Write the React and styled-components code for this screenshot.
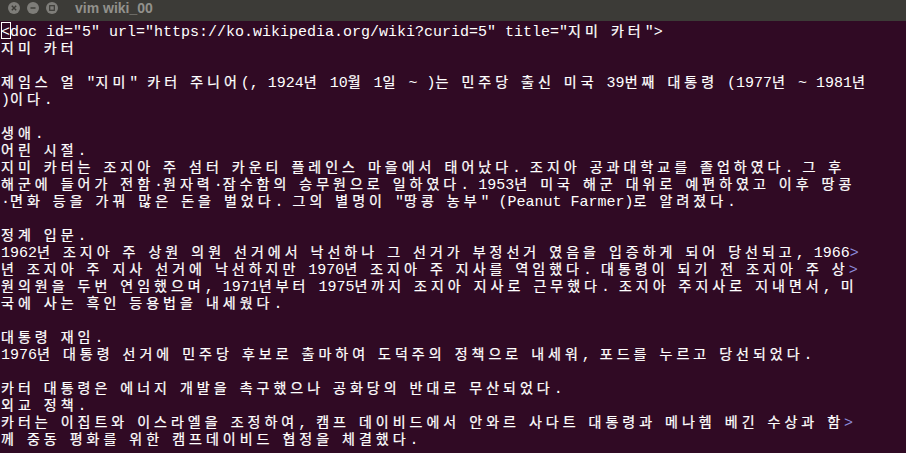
import React from "react";
import styled, { createGlobalStyle } from "styled-components";

const GlobalStyle = createGlobalStyle`
  html, body {
    margin: 0;
    padding: 0;
    background: #300a24;
  }
  body {
    width: 906px;
    height: 453px;
    overflow: hidden;
  }
`;

const Window = styled.div`
  width: 906px;
  height: 453px;
  display: flex;
  flex-direction: column;
  background: #300a24;
  overflow: hidden;
`;

const TitleBar = styled.div`
  flex: none;
  height: 21px;
  box-sizing: border-box;
  background: #3c3b37;
  display: flex;
  align-items: flex-start;
  padding: 2px 0 0 8px;
`;

const Buttons = styled.div`
  display: flex;
  gap: 7px;
`;

const Title = styled.div`
  margin: -2px 0 0 17px;
  font-family: "Liberation Sans", Arial, sans-serif;
  font-weight: bold;
  font-size: 14px;
  line-height: 16px;
  color: #92918c;
`;

const Terminal = styled.div`
  flex: 1;
  padding: 3px 0 0 1px;
  color: #ffffff;
`;

const Row = styled.div`
  height: 17px;
  white-space: pre;
  font-family: "Liberation Mono", monospace;
  font-size: 15px;
  line-height: 17px;
`;

// hangul takes two cells (18px) in the terminal grid
const Wide = styled.span`
  display: inline-block;
  height: 17px;
  line-height: 12.8px;
  font-family: "Noto Sans CJK KR", sans-serif;
  font-size: 14px;
  letter-spacing: 4px;
  -webkit-text-stroke: 0.25px #ffffff;
`;

const WrapMark = styled.span`
  color: #8c8cdc;
`;

const Cursor = styled.span`
  position: relative;
  &::after {
    content: "";
    position: absolute;
    left: 0;
    right: -1px;
    top: -2px;
    height: 17px;
    border: 1px solid #ffffff;
    box-sizing: border-box;
  }
`;

const WinButton = ({ kind }) => (
  <svg width="12" height="12" viewBox="0 0 12 12">
    <circle cx="6" cy="6" r="6" fill="#7e7d79" />
    {kind === "close" && (
      <path d="M3.8 3.8 L8.2 8.2 M8.2 3.8 L3.8 8.2" stroke="#3c3b37" strokeWidth="1.4" />
    )}
    {kind === "min" && <path d="M3.5 6 H8.5" stroke="#3c3b37" strokeWidth="1.4" />}
    {kind === "max" && (
      <rect x="3.7" y="3.7" width="4.6" height="4.6" fill="none" stroke="#3c3b37" strokeWidth="1.2" />
    )}
  </svg>
);

const HANGUL = /([\uAC00-\uD7A3\u3131-\u318E]+)/;

const Segments = ({ text }) =>
  text
    .split(HANGUL)
    .filter((p) => p !== "")
    .map((p, i) => (HANGUL.test(p) ? <Wide key={i}>{p}</Wide> : <span key={i}>{p}</span>));

const lines = [
  { text: '<doc id="5" url="https://ko.wikipedia.org/wiki?curid=5" title="지미 카터">', cursor: true },
  { text: "지미 카터" },
  { text: "" },
  { text: '제임스 얼 "지미" 카터 주니어(, 1924년 10월 1일 ~ )는 민주당 출신 미국 39번째 대통령 (1977년 ~ 1981년' },
  { text: ")이다." },
  { text: "" },
  { text: "생애." },
  { text: "어린 시절." },
  { text: "지미 카터는 조지아 주 섬터 카운티 플레인스 마을에서 태어났다. 조지아 공과대학교를 졸업하였다. 그 후" },
  { text: "해군에 들어가 전함·원자력·잠수함의 승무원으로 일하였다. 1953년 미국 해군 대위로 예편하였고 이후 땅콩" },
  { text: '·면화 등을 가꿔 많은 돈을 벌었다. 그의 별명이 "땅콩 농부" (Peanut Farmer)로 알려졌다.' },
  { text: "" },
  { text: "정계 입문." },
  { text: "1962년 조지아 주 상원 의원 선거에서 낙선하나 그 선거가 부정선거 였음을 입증하게 되어 당선되고, 1966", wrap: true },
  { text: "년 조지아 주 지사 선거에 낙선하지만 1970년 조지아 주 지사를 역임했다. 대통령이 되기 전 조지아 주 상", wrap: true },
  { text: "원의원을 두번 연임했으며, 1971년부터 1975년까지 조지아 지사로 근무했다. 조지아 주지사로 지내면서, 미" },
  { text: "국에 사는 흑인 등용법을 내세웠다." },
  { text: "" },
  { text: "대통령 재임." },
  { text: "1976년 대통령 선거에 민주당 후보로 출마하여 도덕주의 정책으로 내세워, 포드를 누르고 당선되었다." },
  { text: "" },
  { text: "카터 대통령은 에너지 개발을 촉구했으나 공화당의 반대로 무산되었다." },
  { text: "외교 정책." },
  { text: "카터는 이집트와 이스라엘을 조정하여, 캠프 데이비드에서 안와르 사다트 대통령과 메나헴 베긴 수상과 함", wrap: true },
  { text: "께 중동 평화를 위한 캠프데이비드 협정을 체결했다." },
];

const Line = ({ text, cursor, wrap }) => (
  <Row>
    {cursor ? (
      <>
        <Cursor>{text[0]}</Cursor>
        <Segments text={text.slice(1)} />
      </>
    ) : (
      <Segments text={text} />
    )}
    {wrap && <WrapMark>&gt;</WrapMark>}
  </Row>
);

export default function App() {
  return (
    <>
      <GlobalStyle />
      <Window>
        <TitleBar>
          <Buttons>
            <WinButton kind="close" />
            <WinButton kind="min" />
            <WinButton kind="max" />
          </Buttons>
          <Title>vim wiki_00</Title>
        </TitleBar>
        <Terminal>
          {lines.map((l, i) => (
            <Line key={i} {...l} />
          ))}
        </Terminal>
      </Window>
    </>
  );
}
